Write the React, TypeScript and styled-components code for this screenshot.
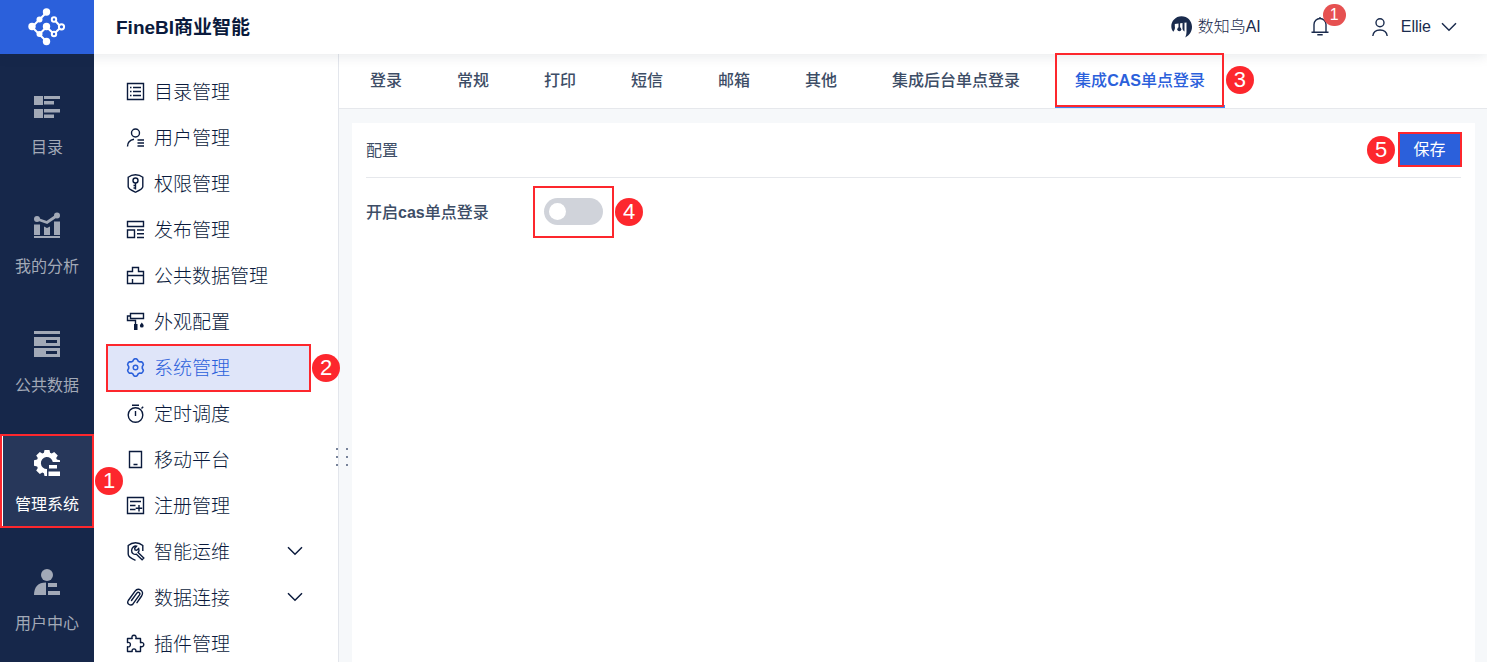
import React from "react";
import styled, { createGlobalStyle, css } from "styled-components";

const color = {
  navy: "#16274a",
  navyActive: "#27375a",
  brand: "#2b60db",
  ink: "#1a2b4d",
  inkStrong: "#0a1a3c",
  text: "#3d4d66",
  muted: "#a2a9b7",
  line: "#e6e8ec",
  page: "#f6f8fa",
  mark: "#fd272d",
};

const GlobalStyle = createGlobalStyle`
  * { box-sizing: border-box; }
  body {
    margin: 0;
    font-family: "Liberation Sans", "Noto Sans CJK SC", sans-serif;
    color: ${color.ink};
  }
  button { font: inherit; color: inherit; background: none; border: 0; padding: 0; cursor: pointer; }
  a { color: inherit; text-decoration: none; }
  svg { display: block; flex: none; }
`;

/* ---------- step markers ---------- */

const Ring = styled.span<{ $inset?: string }>`
  position: absolute;
  inset: ${(p) => p.$inset ?? "0"};
  z-index: 5;
  border: 2px solid ${color.mark};
  pointer-events: none;
`;

const Step = styled.span<{ $before?: boolean }>`
  position: absolute;
  z-index: 6;
  top: calc(50% - 14px);
  ${(p) => (p.$before ? "right: calc(100% + 3px);" : "left: calc(100% + 1px);")}
  width: 28px;
  height: 28px;
  border-radius: 50%;
  background: ${color.mark};
  color: #fff;
  font-size: 22px;
  font-weight: 400;
  line-height: 28px;
  text-align: center;
`;

/* ---------- frame ---------- */

const Page = styled.div`
  display: flex;
  flex-direction: column;
  height: 100vh;
  overflow: hidden;
  background: ${color.page};
`;

const Header = styled.header`
  position: relative;
  z-index: 1;
  display: flex;
  flex: none;
  align-items: center;
  height: 54px;
  padding-right: 30px;
  background: #fff;
  box-shadow: 0 2px 12px rgba(20, 35, 60, 0.1);
`;

const LogoLink = styled.a`
  display: flex;
  align-items: center;
  justify-content: center;
  width: 94px;
  height: 54px;
  background: ${color.brand};
`;

const Title = styled.h1`
  flex: 1;
  margin: 0 0 0 22px;
  padding-top: 2px;
  font-size: 19px;
  font-weight: 700;
  line-height: 28px;
  color: ${color.inkStrong};
`;

const HeaderButton = styled.button<{ $gap?: number; $before?: number }>`
  position: relative;
  display: flex;
  align-items: center;
  gap: ${(p) => p.$gap ?? 0}px;
  margin-left: ${(p) => p.$before ?? 0}px;
  font-size: 16px;
  font-weight: 300;
  line-height: 24px;
`;

const UserName = styled.span`
  margin-left: 3px;
`;

const Count = styled.span`
  position: absolute;
  top: -13px;
  left: 12px;
  width: 23px;
  height: 22px;
  border-radius: 11px;
  background: #e65151;
  color: #fff;
  font-size: 16px;
  line-height: 22px;
  text-align: center;
`;

const Body = styled.div`
  display: flex;
  flex: 1;
  min-height: 0;
`;

const MainNav = styled.nav`
  display: flex;
  flex: none;
  flex-direction: column;
  gap: 25px;
  width: 94px;
  padding-top: 23px;
  background: ${color.navy};
`;

const MainNavItem = styled.button<{ $active?: boolean }>`
  position: relative;
  display: flex;
  flex: none;
  flex-direction: column;
  align-items: center;
  gap: 19px;
  height: 94px;
  padding-top: 16px;
  font-size: 16px;
  line-height: 20px;
  color: ${color.muted};
  ${(p) =>
    p.$active &&
    css`
      background: ${color.navyActive};
      box-shadow: inset 3px 0 #fff;
      color: #fff;
    `}
`;

const SideMenu = styled.nav`
  position: relative;
  flex: none;
  width: 245px;
  padding: 15px 27px 0 12px;
  background: #fff;
  border-right: 1px solid #e3e6ec;
`;

const SideItem = styled.button<{ $active?: boolean }>`
  position: relative;
  display: flex;
  align-items: center;
  gap: 9px;
  width: 100%;
  height: 46px;
  padding: 0 8px 2px 20px;
  font-size: 19px;
  font-weight: 300;
  line-height: 28px;
  text-align: left;
  color: ${color.inkStrong};
  ${(p) =>
    p.$active &&
    css`
      background: #dfe5f9;
      color: ${color.brand};
    `}
`;

const SideLabel = styled.span`
  flex: 1;
  padding-top: 4px;
`;

const Grip = styled.div`
  position: absolute;
  top: 394px;
  right: -10px;
  display: grid;
  grid-template-columns: 2px 2px;
  gap: 6px 8px;
  i {
    width: 2px;
    height: 2px;
    background: #78839a;
  }
`;

const Main = styled.main`
  display: flex;
  flex: 1;
  flex-direction: column;
  min-width: 0;
`;

const Tabs = styled.div`
  display: flex;
  flex: none;
  gap: 15px;
  height: 55px;
  padding-left: 11px;
  background: #fff;
  border-bottom: 1px solid ${color.line};
`;

const Tab = styled.button<{ $active?: boolean }>`
  position: relative;
  height: 54px;
  padding: 2px 20px 0;
  border-bottom: 3px solid transparent;
  font-size: 16px;
  font-weight: 500;
  line-height: 24px;
  color: ${color.text};
  white-space: nowrap;
  ${(p) =>
    p.$active &&
    css`
      border-bottom-color: #3c84f5;
      color: ${color.brand};
    `}
`;

const Panel = styled.section`
  flex: 1;
  margin: 14px 12px 0 13px;
  padding: 0 14px;
  background: #fff;
`;

const PanelHead = styled.div`
  display: flex;
  align-items: center;
  justify-content: space-between;
  height: 55px;
  border-bottom: 1px solid ${color.line};
`;

const PanelTitle = styled.h2`
  margin: 0;
  padding-top: 2px;
  font-size: 16px;
  font-weight: 400;
  line-height: 24px;
  color: ${color.text};
`;

const SaveButton = styled.button`
  position: relative;
  width: 63px;
  height: 34px;
  background: ${color.brand};
  color: #fff;
  font-size: 16px;
  line-height: 24px;
`;

const Field = styled.div`
  display: flex;
  align-items: center;
  height: 67px;
`;

const FieldLabel = styled.label`
  width: 167px;
  padding-top: 2px;
  font-size: 16px;
  font-weight: 500;
  line-height: 24px;
  color: ${color.text};
`;

const SwitchBox = styled.div`
  position: relative;
  display: flex;
  align-items: center;
  justify-content: center;
  width: 81px;
  height: 52px;
`;

const Switch = styled.input`
  appearance: none;
  width: 59px;
  height: 27px;
  margin: 0;
  padding: 5px;
  border-radius: 14px;
  background: #d0d3da;
  cursor: pointer;
  &::before {
    content: "";
    display: block;
    width: 17px;
    height: 17px;
    border-radius: 50%;
    background: #fff;
  }
  &:checked {
    background: ${color.brand};
  }
  &:checked::before {
    margin-left: 32px;
  }
`;

/* ---------- icons ---------- */

const Logo = () => (
  <svg width="38" height="38" viewBox="0 0 38 38" fill="none" stroke="#fff" strokeWidth="2">
    <path d="M18.5 4.5 4 19l14.5 14.5M18.5 19l7.5 7M18.5 19l-7 7M27.500 13l4 4.500M31.500 20.500l-4 4" />
    <g fill="#fff" stroke="none">
      <circle cx="18.500" cy="4" r="3.700" />
      <circle cx="4" cy="18.500" r="3.700" />
      <circle cx="18.500" cy="33.500" r="3.700" />
      <circle cx="18.500" cy="18.500" r="3.700" />
      <circle cx="11.500" cy="11.500" r="3" />
      <circle cx="11.500" cy="26" r="3" />
    </g>
    <circle cx="26" cy="11.500" r="2.200" fill={color.brand} />
    <circle cx="33.500" cy="18.800" r="2.600" fill={color.brand} />
    <circle cx="26" cy="26" r="2.200" fill={color.brand} />
  </svg>
);

const BirdIcon = () => (
  <svg width="22" height="22" viewBox="0 0 22 22" fill={color.ink}>
    <path d="M2.300 15.800C-.8 12 0 6.800 2.800 3.800 5 1.300 7.500.3 10.500.3 16.500.3 21 5 21 10.800c0 4.700-2.300 8.300-6.800 10.700 1-2 1.300-3.800 1.300-6V6.600L3.800 7.900v2.300c.5 2-.2 4-1.500 5.600Z" />
    <path d="M7.500 6.500h1.600v6H7.500z" />
    <circle cx="8.300" cy="13.300" r="2" />
    <path d="M11.500 6.500h2v9c-1-.5-2-1.600-2-3z" />
  </svg>
);

const BellIcon = () => (
  <svg width="18" height="20" viewBox="0 0 18 20" fill="none" stroke={color.ink} strokeWidth="1.400">
    <path d="M.5 15.300h17M3 15V7.500a6 6 0 0 1 12 0V15M9 1.500V0M6.300 17.700h5.400" />
  </svg>
);

const PersonIcon = () => (
  <svg width="16" height="19" viewBox="0 0 16 19" fill="none" stroke={color.ink} strokeWidth="1.400">
    <circle cx="8" cy="4.700" r="4" />
    <path d="M.8 18c.5-4 3.300-6 7.200-6s6.700 2 7.200 6" />
  </svg>
);

const Chevron = () => (
  <svg width="16" height="10" viewBox="0 0 16 10" fill="none" stroke="currentColor" strokeWidth="1.500">
    <path d="m1 1.200 7 7 7-7" />
  </svg>
);

const NavSvg = ({ children }: { children: React.ReactNode }) => (
  <svg width="26" height="26" viewBox="0 0 26 26" fill="currentColor">
    {children}
  </svg>
);

const mainNav = [
  {
    label: "目录",
    icon: <path d="M0 3h9v9H0zM10 3h16v3H10zM10 8h10v3.500H10zM0 16h9v9H0zM10 16h16v3.500H10zM10 21.500h10V25H10z" />,
  },
  {
    label: "我的分析",
    icon: (
      <>
        <path d="M0 24h26v3H0zM0 12.500h6V23H0zM10 14.500l3 1.500 3-1.500V23h-6zM20 9.500h6V23h-6z" />
        <circle cx="3" cy="7" r="3" />
        <circle cx="23" cy="3.500" r="3" />
        <path d="m3 7 10 3.500 10-7" fill="none" stroke="currentColor" strokeWidth="2.800" />
      </>
    ),
  },
  {
    label: "公共数据",
    icon: (
      <path
        fillRule="evenodd"
        d="M0 0h26v3H0zM0 6h26v9H0zM12 9v3h11V9zM0 17h26v9H0zM12 20v3h11v-3z"
      />
    ),
  },
  {
    label: "管理系统",
    active: true,
    icon: (
      <>
        <path d="M10.500 0h5l.6 2.800 1.600.7 2.500-1.600L23.800 5.500l-1.600 2.500.7 1.600 3.100.6V12h-7.200A6 6 0 1 0 13 19v7h-2.500l-.6-2.800-1.600-.7-2.500 1.600-3.600-3.600 1.600-2.500-.7-1.600-3.100-.6v-5.600l3.100-.6.7-1.600L2.200 5.500l3.600-3.600 2.500 1.600 1.600-.7Z" />
        <path d="M15 15h8v3.500h-8zM14.500 21.500H26V26H14.500z" />
      </>
    ),
  },
  {
    label: "用户中心",
    icon: (
      <>
        <circle cx="13" cy="6" r="6" />
        <path d="M0 26C0 18 4 13.500 12 13.500V26zM14 14h9v4h-9zM14 22h12v4H14z" />
      </>
    ),
  },
];

const SideSvg = ({ children }: { children: React.ReactNode }) => (
  <svg width="19" height="19" viewBox="0 0 19 19" fill="none" stroke="currentColor" strokeWidth="1.400">
    {children}
  </svg>
);

const sideMenu: { label: string; icon: React.ReactNode; active?: boolean; expandable?: boolean }[] = [
  {
    label: "目录管理",
    icon: <path d="M1.500 1.500h16v16h-16zM4 5.500h1.500M7 5.500h8M4 9.500h1.500M7 9.500h8M4 13.500h1.500M7 13.500h8" />,
  },
  {
    label: "用户管理",
    icon: (
      <>
        <circle cx="9.500" cy="5" r="4" />
        <path d="M1.500 18.500c0-4 2-6.500 6.500-7.300M11.500 12h6.500M11.500 15h6.500M11.500 18h6.500" />
      </>
    ),
  },
  {
    label: "权限管理",
    icon: (
      <>
        <path d="M9.500.8c2.800 0 5.200.8 7.300 2.400v9.600c0 2.200-4.300 4-7.300 5.400-3-1.400-7.300-3.200-7.300-5.400V3.200C4.300 1.600 6.700.8 9.500.8Z" />
        <circle cx="9.500" cy="6.500" r="2.500" />
        <path d="M9.500 9v6.500M9.500 11.500H7.500M9.500 14H7.500" />
      </>
    ),
  },
  { label: "发布管理", icon: <path d="M1.500 1.500h16v5h-16zM1.500 10h7v7.500h-7zM11 10h7M11 13.700h7M11 17.500h7" /> },
  { label: "公共数据管理", icon: <path d="M1.500 5.500h5v-4h6v4h5v12h-16zM1.500 9.500h16M6.500 17.500v-4.500" /> },
  {
    label: "外观配置",
    icon: (
      <>
        <path d="M4.500 1.500h13v5h-13zM4.500 4h-3v4.500h8V12" />
        <path d="M8 12h3.500v6H8zM15.800 10.500c1 1.500 1.900 2.300 1.900 3.200a1.900 1.900 0 0 1-3.800 0c0-.9.900-1.700 1.900-3.200Z" fill="currentColor" stroke="none" />
      </>
    ),
  },
  {
    label: "系统管理",
    active: true,
    icon: (
      <>
        <path
          strokeWidth="1.600"
          strokeLinejoin="round"
          d="M7.800 1.300c1-.7 2.400-.7 3.400 0l1 1.900 1.300.7 2.100-.1c1.100.6 1.700 1.700 1.800 2.900l-1.100 1.900v1.800l1.100 1.900c-.1 1.200-.7 2.300-1.800 2.900l-2.100-.1-1.300.7-1 1.900c-1 .7-2.400.7-3.400 0l-1-1.900-1.300-.7-2.100.1c-1.100-.6-1.700-1.700-1.800-2.900l1.100-1.900V8.600L1.600 6.700c.1-1.200.7-2.300 1.800-2.900l2.100.1 1.300-.7Z"
        />
        <circle cx="9.500" cy="9.500" r="2.300" />
      </>
    ),
  },
  {
    label: "定时调度",
    icon: (
      <>
        <circle cx="9.500" cy="11" r="7.300" />
        <path d="M6 1.300h7M9.500 7v5M15.500 4.500l1.700-1.700" />
      </>
    ),
  },
  { label: "移动平台", icon: <path d="M3.500 1.500h12v16h-12zM7.500 14.500h4" /> },
  { label: "注册管理", icon: <path d="M1.500 1.500h16v16h-16zM4 5.500h11M4 9.500h5.500M4 13.500h5.500M13 9v6.500M9.700 12.300h6.500" /> },
  {
    label: "智能运维",
    expandable: true,
    icon: (
      <>
        <path d="M16.800 9V3.500C14.800 1.800 12.400.8 9.500.8s-5.300 1-7.300 2.700V12c0 3 2.800 4.500 7.300 6.300" />
        <path d="m10.500 4.200-1.800 2 .3 1.700 1.700.3 2-1.800c.7 1.800.2 3.200-.6 4l5.700 5.700-1.700 1.700-5.700-5.600c-2 .7-5-.5-4.800-4 .3-3 2.900-4.600 4.900-4Z" />
      </>
    ),
  },
  {
    label: "数据连接",
    expandable: true,
    icon: (
      <path
        strokeLinecap="round"
        d="m5.500 12.500 5.300-7.300c1.500-2 4-.3 2.700 1.700l-6.300 8.800c-2.300 3-7 .2-4.900-3.200l6.600-9.200c3.200-4.300 10-.6 6.700 4.700L11 14.700"
      />
    ),
  },
  {
    label: "插件管理",
    icon: (
      <path
        strokeLinejoin="round"
        d="M1.500 4.500h4.700c-.8-1.800.2-3.300 1.800-3.300s2.600 1.500 1.800 3.300h4.700v4.200c1.800-.7 3.300.2 3.300 1.900s-1.500 2.600-3.300 1.900v5H9.800c.4-1.500-.4-2.600-1.800-2.600s-2.200 1.100-1.800 2.600H1.500v-4.700c1.800.4 2.900-.6 2.900-2.200s-1.100-2.500-2.900-2.100Z"
      />
    ),
  },
];

const tabs: { id: string; label: React.ReactNode }[] = [
  { id: "login", label: "登录" },
  { id: "general", label: "常规" },
  { id: "print", label: "打印" },
  { id: "sms", label: "短信" },
  { id: "mail", label: "邮箱" },
  { id: "other", label: "其他" },
  { id: "sso", label: "集成后台单点登录" },
  {
    id: "cas",
    label: (
      <>
        集成<b>CAS</b>单点登录
      </>
    ),
  },
];

export default function App() {
  return (
    <Page>
      <GlobalStyle />
      <Header>
        <LogoLink href="#" aria-label="FineBI">
          <Logo />
        </LogoLink>
        <Title>FineBI商业智能</Title>
        <HeaderButton $gap={5}>
          <BirdIcon />
          数知鸟AI
        </HeaderButton>
        <HeaderButton $before={50} aria-label="通知">
          <BellIcon />
          <Count>1</Count>
        </HeaderButton>
        <HeaderButton $before={43} $gap={10}>
          <PersonIcon />
          <UserName>Ellie</UserName>
          <Chevron />
        </HeaderButton>
      </Header>
      <Body>
        <MainNav>
          {mainNav.map((item) => (
            <MainNavItem key={item.label} $active={item.active}>
              <NavSvg>{item.icon}</NavSvg>
              {item.label}
              {item.active && (
                <>
                  <Ring />
                  <Step>1</Step>
                </>
              )}
            </MainNavItem>
          ))}
        </MainNav>
        <SideMenu>
          {sideMenu.map((item) => (
            <SideItem key={item.label} $active={item.active}>
              <SideSvg>{item.icon}</SideSvg>
              <SideLabel>{item.label}</SideLabel>
              {item.expandable && <Chevron />}
              {item.active && (
                <>
                  <Ring $inset="-1px 0" />
                  <Step>2</Step>
                </>
              )}
            </SideItem>
          ))}
          <Grip>
            <i />
            <i />
            <i />
            <i />
            <i />
            <i />
          </Grip>
        </SideMenu>
        <Main>
          <Tabs role="tablist">
            {tabs.map(({ id, label }) => {
              const active = id === "cas";
              return (
                <Tab key={id} role="tab" aria-selected={active} $active={active}>
                  {label}
                  {active && (
                    <>
                      <Ring $inset="-1px 1px -2px 0" />
                      <Step>3</Step>
                    </>
                  )}
                </Tab>
              );
            })}
          </Tabs>
          <Panel>
            <PanelHead>
              <PanelTitle>配置</PanelTitle>
              <SaveButton>
                保存
                <Ring $inset="-1px -1px 0 0" />
                <Step $before>5</Step>
              </SaveButton>
            </PanelHead>
            <Field>
              <FieldLabel htmlFor="cas-switch">
                开启<b>cas</b>单点登录
              </FieldLabel>
              <SwitchBox>
                <Switch id="cas-switch" type="checkbox" role="switch" />
                <Ring />
                <Step>4</Step>
              </SwitchBox>
            </Field>
          </Panel>
        </Main>
      </Body>
    </Page>
  );
}
